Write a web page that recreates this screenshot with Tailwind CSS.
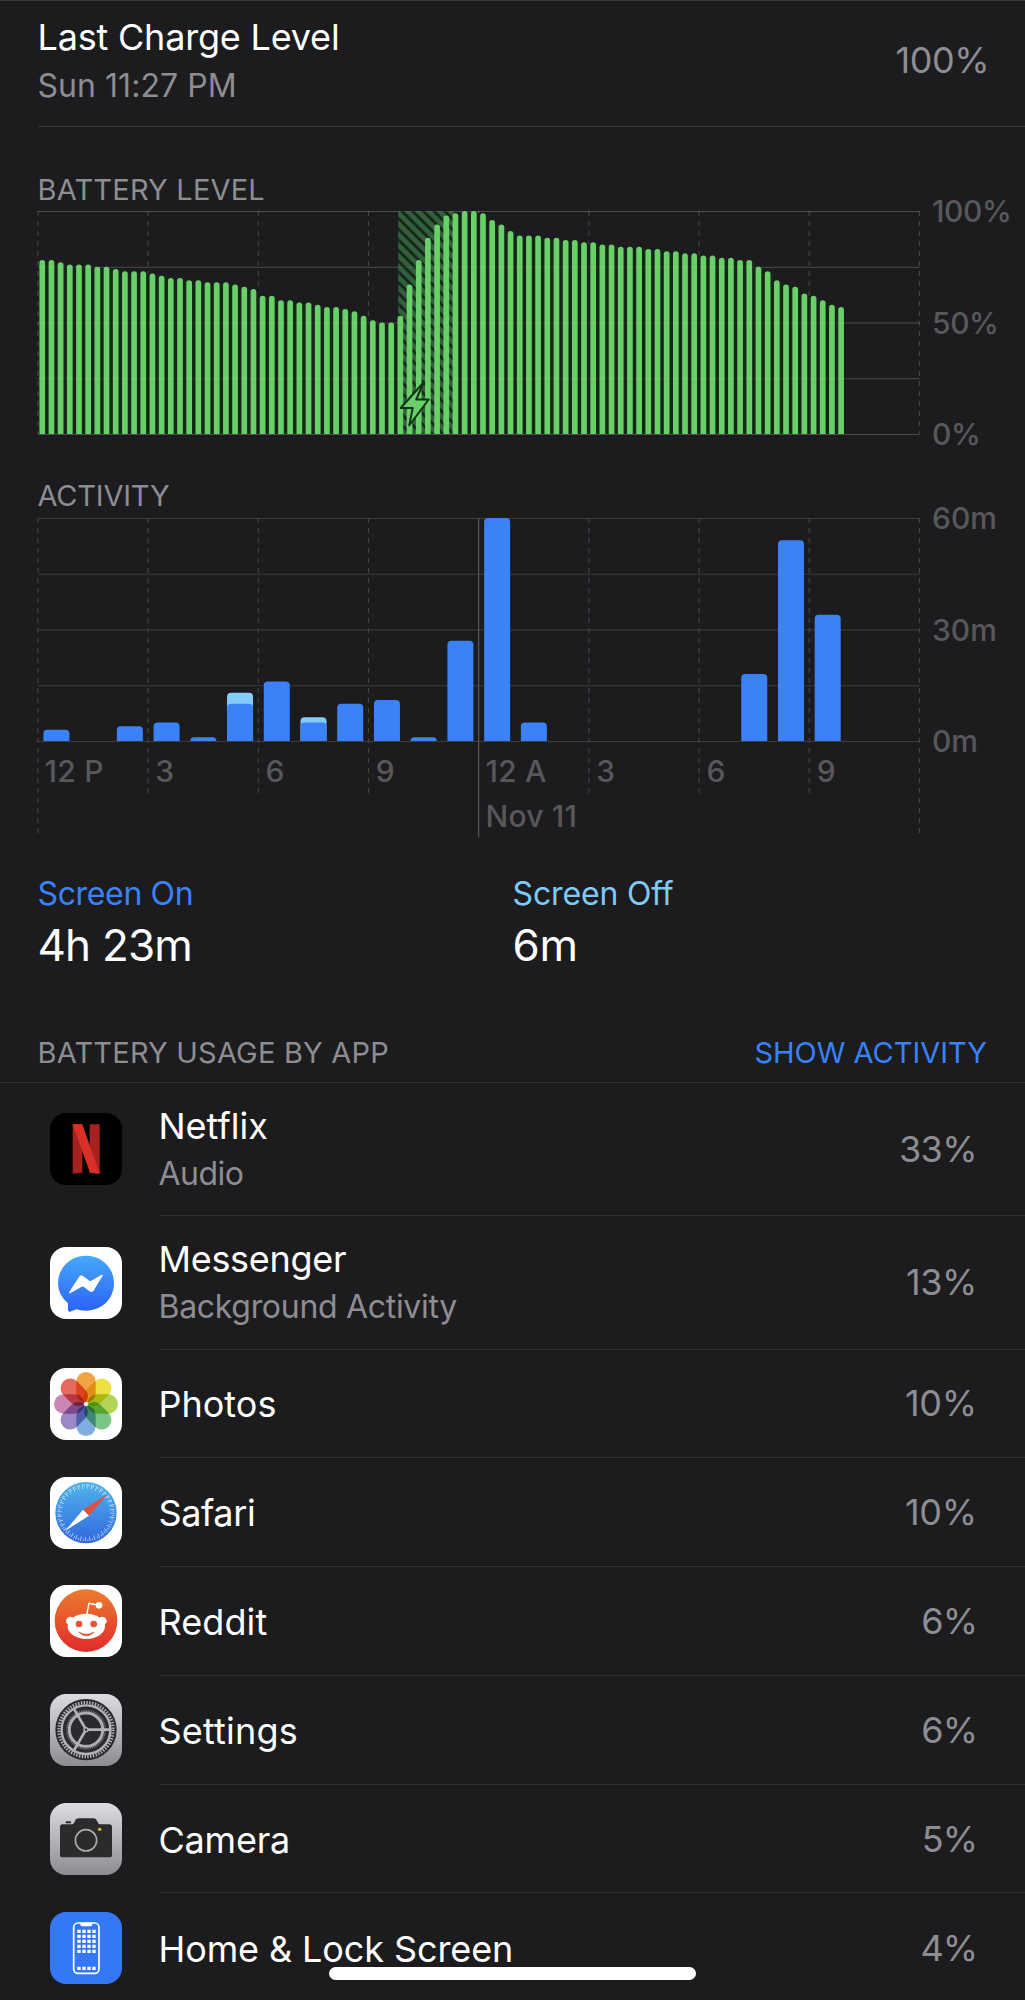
<!DOCTYPE html>
<html lang="en">
  <head>
    <meta charset="UTF-8" />
    <meta name="viewport" content="width=device-width, initial-scale=1.0" />
    <title>Battery</title>
    <script src="https://cdn.jsdelivr.net/npm/@tailwindcss/browser@4"></script>
    <style>
      body {
        font-family: "Inter", sans-serif;
      }
    </style>
  </head>
  <body class="bg-[#1c1c1e] text-white h-[2000px] w-[1025px] overflow-hidden relative">
    <!-- Last charge -->
    <header class="border-t border-[#38383a]">
      <div class="ml-[37.5px] h-[126px] pt-[13px] pr-[36px] flex justify-between border-b border-[#38383a]">
        <div>
          <h1 class="text-[36px] leading-[46px] tracking-[-0.2px]">Last Charge Level</h1>
          <p class="text-[32px] leading-[51px] text-[#8d8d93] tracking-[0.05px]">Sun 11:27 PM</p>
        </div>
        <span class="text-[36px] leading-[93px] text-[#8d8d93] tracking-[-0.5px]">100%</span>
      </div>
    </header>

    <!-- Battery level -->
    <section class="pl-[37.5px] pt-[41px]">
      <h2 class="text-[29px] leading-[43px] text-[#8d8d93] tracking-[0.2px]">BATTERY LEVEL</h2>
      <div class="flex h-[223px]">
        <svg id="level" class="w-[882px] h-[223px] overflow-visible shrink-0" viewBox="0 0 882 223"></svg>
        <div class="flex flex-col justify-between pl-[12.5px] text-[30px] leading-[0px] font-medium text-[#58585c] tracking-[-0.4px]">
          <span>100%</span>
          <span>50%</span>
          <span>0%</span>
        </div>
      </div>
    </section>

    <!-- Activity -->
    <section class="pl-[37.5px] pt-10">
      <h2 class="text-[29px] leading-[44px] text-[#8d8d93] tracking-[-0.2px]">ACTIVITY</h2>
      <div class="flex h-[223px]">
        <svg id="activity" class="w-[882px] h-[223px] overflow-visible shrink-0" viewBox="0 0 882 223"></svg>
        <div class="flex flex-col justify-between pl-[12.5px] text-[30px] leading-[0px] font-medium text-[#58585c]">
          <span>60m</span>
          <span>30m</span>
          <span>0m</span>
        </div>
      </div>
      <div class="grid grid-cols-8 w-[882px] h-[90px] text-[30px] leading-[60px] font-medium text-[#58585c]">
        <span class="pl-[7px] tracking-[0.3px]">12 P</span>
        <span class="pl-[7.5px]">3</span>
        <span class="pl-[7.5px]">6</span>
        <span class="pl-[7.5px]">9</span>
        <div class="pl-[7px] whitespace-nowrap tracking-[0.2px]">
          <p>12 A</p>
          <p class="leading-[30px]">Nov 11</p>
        </div>
        <span class="pl-[7.5px]">3</span>
        <span class="pl-[7.5px]">6</span>
        <span class="pl-[7.5px]">9</span>
      </div>
    </section>

    <!-- Totals -->
    <section class="flex pl-[37.5px] pt-[38px]">
      <div class="w-[475px]">
        <p class="text-[32px] leading-[50px] text-[#3a82f7] tracking-[-0.35px]">Screen On</p>
        <p class="text-[44px] leading-[53px] tracking-[-0.8px]">4h 23m</p>
      </div>
      <div>
        <p class="text-[32px] leading-[50px] text-[#7ecbf9] tracking-[-0.15px]">Screen Off</p>
        <p class="text-[44px] leading-[53px] tracking-[-0.2px]">6m</p>
      </div>
    </section>

    <!-- Usage by app -->
    <section class="pt-[51.5px]">
      <div class="flex justify-between pl-[37.5px] pr-[38px] h-[59px] text-[29px] leading-[58px] border-b border-[#303033]">
        <h2 class="text-[#8d8d93] tracking-[0.2px]">BATTERY USAGE BY APP</h2>
        <a class="text-[#3a82f7]">SHOW ACTIVITY</a>
      </div>

      <ul class="text-[36px]">
        <li class="flex items-center h-[133.5px] pl-[49.5px]">
          <svg class="size-[72px] shrink-0 rounded-2xl" viewBox="0 0 216 216">
            <rect width="216" height="216" fill="#000" />
            <path d="M68 34h29v145q-15 1-29 3zM119 34h30v148q-15-2-30-3z" fill="#a5221f" />
            <path d="M68 34h29l52 148q-15-2-29-3z" fill="#d92f27" />
          </svg>
          <div class="ml-[37px] flex-1 h-full flex items-center justify-between border-b border-[#303033] pr-[48px]">
            <div class="pt-[3px]">
              <h3 class="leading-[47px]">Netflix</h3>
              <p class="text-[32px] leading-[48px] text-[#8d8d93] tracking-[-0.5px]">Audio</p>
            </div>
            <span class="text-[#8d8d93] tracking-[-0.6px]">33%</span>
          </div>
        </li>
        <li class="flex items-center h-[133.5px] pl-[49.5px]">
          <svg class="size-[72px] shrink-0 rounded-2xl" viewBox="0 0 216 216">
            <defs>
              <linearGradient id="msg" x2="0" y2="1">
                <stop stop-color="#46a9f9" />
                <stop offset="1" stop-color="#2b62f6" />
              </linearGradient>
            </defs>
            <rect width="216" height="216" fill="#fff" />
            <path d="M108 26c48 0 84 37 84 83s-36 82-84 82q-16 0-29-4-10 4-19 7-5 1-6-5l0-20q-30-25-30-60c0-46 36-83 84-83z" fill="url(#msg)" />
            <path d="M59 137L90 89Q94 85 99 89L117 103Q121 106 126 102L156 85L129 130Q125 135 120 131L102 118Q98 115 93 118Z" fill="#fff" stroke="#fff" stroke-width="4" stroke-linejoin="round" />
          </svg>
          <div class="ml-[37px] flex-1 h-full flex items-center justify-between border-b border-[#303033] pr-[48px]">
            <div class="pt-[3px]">
              <h3 class="leading-[47px] tracking-[-0.3px]">Messenger</h3>
              <p class="text-[32px] leading-[48px] text-[#8d8d93] tracking-[-0.3px]">Background Activity</p>
            </div>
            <span class="text-[#8d8d93] tracking-[-0.4px]">13%</span>
          </div>
        </li>
        <li class="flex items-center h-[108.8px] pl-[49.5px]">
          <svg class="size-[72px] shrink-0 rounded-2xl isolate" viewBox="0 0 216 216">
            <rect width="216" height="216" fill="#fff" />
            <g transform="translate(108 108)">
              <rect class="mix-blend-multiply" x="-29" y="-96" width="58" height="92" rx="29" fill="#f2a343" />
              <rect class="mix-blend-multiply" x="-29" y="-96" width="58" height="92" rx="29" fill="#ece042" transform="rotate(45)" />
              <rect class="mix-blend-multiply" x="-29" y="-96" width="58" height="92" rx="29" fill="#b3d455" transform="rotate(90)" />
              <rect class="mix-blend-multiply" x="-29" y="-96" width="58" height="92" rx="29" fill="#7dc586" transform="rotate(135)" />
              <rect class="mix-blend-multiply" x="-29" y="-96" width="58" height="92" rx="29" fill="#7fafe0" transform="rotate(180)" />
              <rect class="mix-blend-multiply" x="-29" y="-96" width="58" height="92" rx="29" fill="#9b89c6" transform="rotate(225)" />
              <rect class="mix-blend-multiply" x="-29" y="-96" width="58" height="92" rx="29" fill="#ca87b5" transform="rotate(270)" />
              <rect class="mix-blend-multiply" x="-29" y="-96" width="58" height="92" rx="29" fill="#e56a5c" transform="rotate(315)" />
              <circle r="6" fill="#fff" />
            </g>
          </svg>
          <div class="ml-[37px] flex-1 h-full flex items-center justify-between border-b border-[#303033] pr-[48px]">
            <h3 class="pt-0.5">Photos</h3>
            <span class="text-[#8d8d93] tracking-[-0.2px]">10%</span>
          </div>
        </li>
        <li class="flex items-center h-[108.8px] pl-[49.5px]">
          <svg class="size-[72px] shrink-0 rounded-2xl" viewBox="0 0 216 216">
            <defs>
              <linearGradient id="saf" x2="0" y2="1">
                <stop stop-color="#52b4ea" />
                <stop offset="1" stop-color="#2f67df" />
              </linearGradient>
            </defs>
            <rect width="216" height="216" fill="#fff" />
            <circle cx="108" cy="107" r="92" fill="url(#saf)" />
            <circle cx="108" cy="107" r="79" fill="none" stroke="#fff" stroke-opacity=".75" stroke-width="14" stroke-dasharray="2.4 11.39" />
            <circle cx="108" cy="107" r="82" fill="none" stroke="#fff" stroke-opacity=".7" stroke-width="7" stroke-dasharray="2.2 12.11" stroke-dashoffset="-7.1" />
            <path d="M172 52L99 98L117 116Z" fill="#e0503f" />
            <path d="M45 162L99 98L117 116Z" fill="#fff" />
          </svg>
          <div class="ml-[37px] flex-1 h-full flex items-center justify-between border-b border-[#303033] pr-[48px]">
            <h3 class="pt-0.5 tracking-[-0.4px]">Safari</h3>
            <span class="text-[#8d8d93] tracking-[-0.2px]">10%</span>
          </div>
        </li>
        <li class="flex items-center h-[108.8px] pl-[49.5px]">
          <svg class="size-[72px] shrink-0 rounded-2xl" viewBox="0 0 216 216">
            <defs>
              <linearGradient id="red" x2="0" y2="1">
                <stop stop-color="#ec7c30" />
                <stop offset="1" stop-color="#e12a2a" />
              </linearGradient>
            </defs>
            <rect width="216" height="216" fill="#fff" />
            <circle cx="108" cy="107" r="94" fill="url(#red)" />
            <g fill="#fff">
              <ellipse cx="109" cy="124" rx="56" ry="38" />
              <circle cx="61" cy="108" r="13" />
              <circle cx="157" cy="108" r="13" />
              <circle cx="147" cy="61" r="10" />
            </g>
            <path d="M110 90L117 55L146 61" fill="none" stroke="#fff" stroke-width="4.5" stroke-linejoin="round" />
            <circle cx="87" cy="117" r="10" fill="#e4542d" />
            <circle cx="131" cy="117" r="10" fill="#e4542d" />
            <path d="M86 141Q109 155 132 141Q109 164 86 141Z" fill="#e24a2c" stroke="#e24a2c" stroke-width="2" stroke-linejoin="round" />
          </svg>
          <div class="ml-[37px] flex-1 h-full flex items-center justify-between border-b border-[#303033] pr-[48px]">
            <h3 class="pt-0.5 tracking-[0.1px]">Reddit</h3>
            <span class="text-[#8d8d93] tracking-[-1px]">6%</span>
          </div>
        </li>
        <li class="flex items-center h-[108.8px] pl-[49.5px]">
          <svg class="size-[72px] shrink-0 rounded-2xl" viewBox="0 0 216 216">
            <defs>
              <linearGradient id="gray" x2="0" y2="1">
                <stop stop-color="#dddde1" />
                <stop offset="1" stop-color="#8c8c91" />
              </linearGradient>
            </defs>
            <rect width="216" height="216" fill="url(#gray)" />
            <g transform="translate(108 107)" fill="none">
              <circle r="92" fill="#2b2b2d" />
              <circle r="81" stroke="#b4b4b8" stroke-width="10" stroke-dasharray="4.2 4.28" />
              <circle r="73" stroke="#b4b4b8" stroke-width="7" />
              <circle r="57" stroke="#7c7c80" stroke-width="6" stroke-dasharray="2.6 2.64" />
              <circle r="50" stroke="#aeaeb2" stroke-width="9" />
              <circle r="44" fill="#2b2b2d" />
              <g stroke="#b4b4b8" stroke-width="8">
                <path d="M0 0H72" />
                <path d="M0 0H72" transform="rotate(120)" />
                <path d="M0 0H72" transform="rotate(240)" />
              </g>
              <circle r="8" fill="#b4b4b8" />
              <circle r="3.5" fill="#2b2b2d" />
            </g>
          </svg>
          <div class="ml-[37px] flex-1 h-full flex items-center justify-between border-b border-[#303033] pr-[48px]">
            <h3 class="pt-0.5 tracking-[0.2px]">Settings</h3>
            <span class="text-[#8d8d93] tracking-[-1px]">6%</span>
          </div>
        </li>
        <li class="flex items-center h-[108.8px] pl-[49.5px]">
          <svg class="size-[72px] shrink-0 rounded-2xl" viewBox="0 0 216 216">
            <rect width="216" height="216" fill="url(#gray)" />
            <rect x="47" y="55" width="16" height="6" rx="2" fill="#2b2b2d" />
            <path d="M38 64H64Q71 64 74 56Q78 46 86 46H130Q138 46 142 56Q145 64 152 64H178Q186 64 186 72V155Q186 163 178 163H38Q30 163 30 155V72Q30 64 38 64Z" fill="#2b2b2d" />
            <circle cx="108" cy="112" r="32" fill="none" stroke="#ababae" stroke-width="5" />
            <circle cx="149" cy="79" r="5" fill="#e2b93c" />
          </svg>
          <div class="ml-[37px] flex-1 h-full flex items-center justify-between border-b border-[#303033] pr-[48px]">
            <h3 class="pt-0.5 tracking-[-0.2px]">Camera</h3>
            <span class="text-[#8d8d93] tracking-[-1px]">5%</span>
          </div>
        </li>
        <li class="flex items-center h-[108.8px] pl-[49.5px]">
          <svg class="size-[72px] shrink-0 rounded-2xl" viewBox="0 0 216 216">
            <rect width="216" height="216" fill="#3478f6" />
            <rect x="71" y="33" width="76" height="151" rx="13" fill="none" stroke="#fff" stroke-width="5" />
            <path d="M91 33H127V38Q125 43 121 43H97Q93 43 91 38Z" fill="#fff" />
            <path d="M87 53V123M102 53V123M117 53V123M132 53V123" stroke="#fff" stroke-width="10" stroke-dasharray="10 5" />
            <path d="M82 169H137" stroke="#fff" stroke-width="10" stroke-dasharray="10 5" />
          </svg>
          <div class="ml-[37px] flex-1 h-full flex items-center justify-between pr-[48px]">
            <h3 class="pt-0.5 tracking-[-0.1px]">Home &amp; Lock Screen</h3>
            <span class="text-[#8d8d93] tracking-[-1px]">4%</span>
          </div>
        </li>
      </ul>
    </section>

    <!-- Home indicator -->
    <div class="absolute left-[329px] top-[1967px] w-[367px] h-[13px] rounded-full bg-white"></div>

    <script>
      const W = 881.5;
      const H = 223;

      // one reading every 15 minutes
      const levels = [
        78, 78, 77, 76, 76, 76, 75, 75, 74, 73, 73, 73, 72, 71, 70, 70, 69, 69,
        68, 68, 68, 67, 66, 65, 62, 62, 60, 60, 59, 59, 58, 57, 57, 56, 55, 53,
        51, 50, 50, 53, 67, 78, 88, 94, 98, 99, 100, 100, 99, 96, 94, 91, 89,
        89, 89, 88, 88, 87, 87, 86, 86, 85, 85, 84, 84, 84, 83, 83, 82, 82, 81,
        81, 80, 80, 79, 79, 78, 78, 75, 73, 69, 67, 66, 63, 62, 60, 58, 57,
      ];

      // [hour, total minutes, screen on minutes]
      const activity = [
        [0, 3, 3], [2, 4, 4], [3, 5, 5], [4, 1, 1], [5, 13, 10], [6, 16, 16],
        [7, 6.4, 5], [8, 10, 10], [9, 11, 11], [10, 1, 1], [11, 27, 27],
        [12, 60, 60], [13, 5, 5], [19, 18, 18], [20, 54, 54], [21, 34, 34],
      ];

      function hLines(opacity) {
        let s = "";
        for (let i = 0; i <= 4; i++) {
          const y = (i * H) / 4 + 0.5;
          s += `<path d="M0 ${y}H${W}" stroke="#fff" stroke-opacity="${opacity}"/>`;
        }
        return s;
      }

      function vLines(short, long) {
        let s = "";
        for (let i = 0; i <= 8; i++) {
          const x = (i * W) / 8 - 0.1;
          const end = i % 4 === 0 ? long : short;
          s +=
            i === 4
              ? `<path d="M${x} 0V${end}" stroke="#58585b" stroke-width="1.2"/>`
              : `<path d="M${x} 0V${end}" stroke="#424245" stroke-width="1.2" stroke-dasharray="5 5"/>`;
        }
        return s;
      }

      function bar(x, w, h, r, fill) {
        r = Math.min(r, h);
        const y = H - h;
        return `<path d="M${x} ${H}V${y + r}q0 ${-r} ${r} ${-r}h${w - 2 * r}q${r} 0 ${r} ${r}V${H}z" fill="${fill}"/>`;
      }

      let level = vLines(H, H) + hLines(0.14);
      levels.forEach((v, i) => {
        const x = (i * W) / 96;
        const h = (v / 100) * H - 2;
        if (i < 87) level += `<rect x="${x + 6}" y="${H - h}" width="4.5" height="${h}" fill="#17251a"/>`;
      });
      // charging period
      level += `<defs><pattern id="hatch" width="10" height="10" patternTransform="scale(1.07)" patternUnits="userSpaceOnUse">
          <path d="M-2 -2L12 12M-2 8L2 12M8 -2L12 2" stroke="#14221a" stroke-width="2.5"/>
        </pattern></defs>
        <rect x="360.2" y="0" width="56" height="${H}" fill="#335f3a"/>
        <rect x="360.2" y="0" width="56" height="${H}" fill="url(#hatch)"/>`;
      levels.forEach((v, i) => {
        level += bar((i * W) / 96 + 1.4, 5.7, (v / 100) * H, 2.8, "#69cf68");
      });
      level += hLines(0.08);
      level += `<path d="M386 171L362.7 197H374.7L371.2 214.5L390.7 188.5H378.2Z"
        fill="#69cf68" stroke="#14301a" stroke-width="2" stroke-linejoin="round"/>`;
      document.getElementById("level").innerHTML = level;

      let act = hLines(0.14) + vLines(278, 319);
      activity.forEach(([hr, total, on]) => {
        const x = (hr * W) / 24 + 5.4;
        if (total > on) act += bar(x, 26, (total / 60) * H, 4, "#84cdfa");
        act += bar(x, 26, (on / 60) * H, 4, "#3b82f7");
      });
      document.getElementById("activity").innerHTML = act;
    </script>
  </body>
</html>
